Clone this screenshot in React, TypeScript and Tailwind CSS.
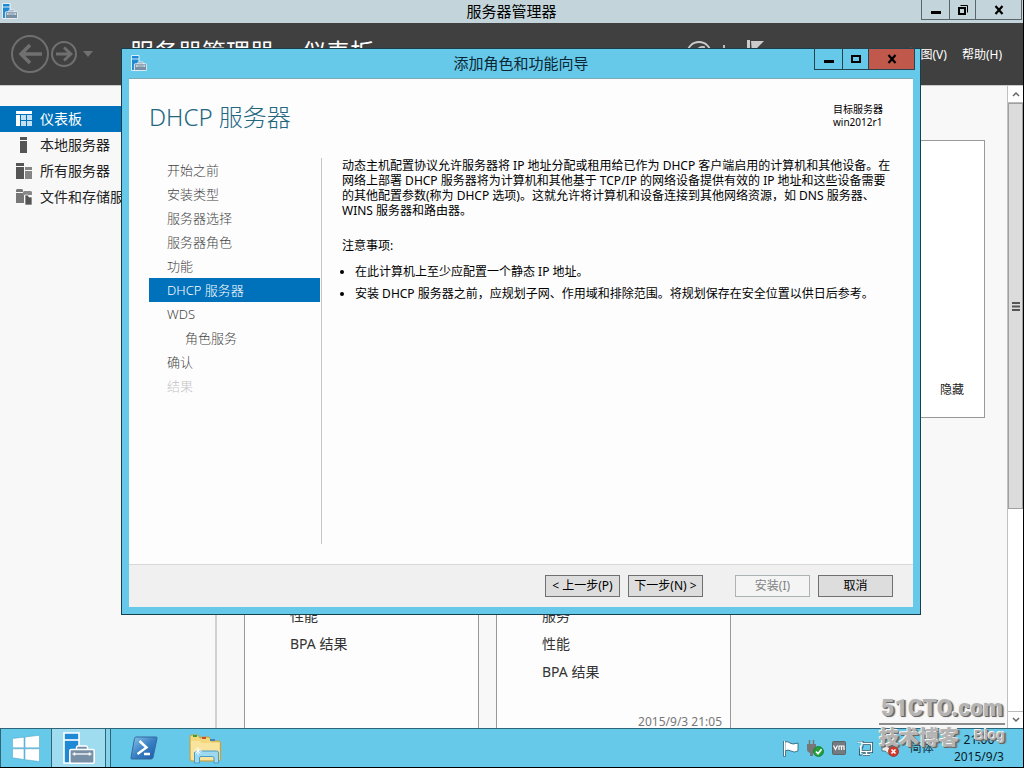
import React from "react";

const NAV = [
  { label: "开始之前" },
  { label: "安装类型" },
  { label: "服务器选择" },
  { label: "服务器角色" },
  { label: "功能" },
  { label: "DHCP 服务器", active: true },
  { label: "WDS" },
  { label: "角色服务", nested: true },
  { label: "确认" },
  { label: "结果", disabled: true },
];

function ServerIcon({ className }: { className: string }) {
  return (
    <svg viewBox="0 0 32 32" className={className} aria-hidden="true">
      <path d="M1 1h15v30H1z" fill="#1e8ad6" stroke="#fff" strokeWidth="1.6" />
      <path d="M1 8h15" stroke="#fff" strokeWidth="1.6" />
      <path d="M13.500 19v-3.500q0-1.500 1.500-1.500h8q1.500 0 1.500 1.500V19z" fill="#7790a6" stroke="#fff" strokeWidth="1.400" />
      <rect x="6.800" y="17.500" width="24.400" height="13.700" rx="1.500" fill="#7790a6" stroke="#fff" strokeWidth="1.600" />
      <path d="M9.500 22h19" stroke="#fff" strokeWidth="1.300" />
      <path d="M11.500 20.500v3M26.500 20.500v3" stroke="#fff" strokeWidth="1.600" />
    </svg>
  );
}

function MinGlyph() {
  return (
    <svg viewBox="0 0 12 12" className="size-3" aria-hidden="true">
      <path d="M1 7h10v3H1z" fill="#000" />
    </svg>
  );
}
function MaxGlyph() {
  return (
    <svg viewBox="0 0 12 12" className="size-3" aria-hidden="true">
      <rect x="2" y="3" width="8" height="6" fill="none" stroke="#000" strokeWidth="2" />
    </svg>
  );
}
function RestoreGlyph() {
  return (
    <svg viewBox="0 0 12 12" className="size-3" aria-hidden="true">
      <path d="M3.500 1.500h7v7" fill="none" stroke="#000" />
      <rect x="2" y="4" width="6" height="6" fill="none" stroke="#000" strokeWidth="2" />
    </svg>
  );
}
function CloseGlyph() {
  return (
    <svg viewBox="0 0 12 12" className="size-3" aria-hidden="true">
      <path d="M2.500 2l7 8M9.500 2l-7 8" stroke="#000" strokeWidth="2.200" />
    </svg>
  );
}

function SideIcon({ kind }: { kind: string }) {
  return (
    <svg viewBox="0 0 16 16" className="size-4" aria-hidden="true">
      {kind === "dash" && (
        <>
          <path d="M0 0h16v3H0z" fill="#fff" />
          <path d="M0 4h4v11H0z" fill="#fff" />
          <path d="M5 4h5v5H5zM11 4h5v5h-5zM5 10h5v5H5zM11 10h5v5h-5z" fill="#c3e1f5" />
        </>
      )}
      {kind === "local" && <path d="M4 0h7v3H4zM4 4h7v12H4z" fill="#555" />}
      {kind === "all" && (
        <>
          <path d="M0 0h8v3H0zM0 4h8v12H0z" fill="#555" />
          <path d="M9 4h7v3H9zM9 8h7v8H9z" fill="#858585" />
        </>
      )}
      {kind === "files" && (
        <>
          <path d="M0 1l1-1h5l1 1v2H0zM0 4h8v10H0z" fill="#777" />
          <path d="M7 3l1-1h7l1 1v3H7z" fill="#888" />
          <path d="M9 6h3l1 2h3v8H9z" fill="#555" stroke="#f8f8f8" strokeWidth="0.700" />
        </>
      )}
    </svg>
  );
}

function SideItem({ kind, label, active }: { kind: string; label: string; active?: boolean }) {
  return (
    <a
      href="#"
      className={
        active
          ? "flex h-[26px] items-center gap-2 bg-[#0072bc] pl-4 text-sm text-white"
          : "flex h-[26px] items-center gap-2 pl-4 text-sm text-[#222]"
      }
    >
      <SideIcon kind={kind} />
      {label}
    </a>
  );
}

function Tile({ rows, date }: { rows: string[]; date?: string }) {
  return (
    <section className="flex w-[235px] flex-col justify-end border-x border-t border-[#999] bg-[#fdfdfd]">
      <ul className="pl-[45px] text-sm leading-7 text-[#333]">
        {rows.map((r) => (
          <li key={r}>{r}</li>
        ))}
      </ul>
      <p className={date ? "mt-7 h-[14px] pr-2 text-right text-xs leading-4 text-[#777]" : "mt-14 h-[14px]"}>{date}</p>
    </section>
  );
}

function Dialog() {
  return (
    <div
      role="dialog"
      aria-labelledby="wizard-title"
      className="absolute top-12 left-[121px] flex h-[567px] w-[800px] flex-col border border-[#17404f] bg-[#66c9e9] px-[7px] pb-[7px]"
    >
      <header className="grid h-[30px] shrink-0 grid-cols-[1fr_auto_1fr] border-b border-[#7fa9b5]">
        <ServerIcon className="mt-[6px] ml-[2px] size-4" />
        <h2 id="wizard-title" className="text-[15px] leading-7 text-[#0b2733]">
          添加角色和功能向导
        </h2>
        <div className="-mr-[2px] -mt-px flex h-[22px] justify-self-end border border-[#26444f]">
          <button aria-label="最小化" className="flex w-7 items-center justify-center border-r border-[#26444f]">
            <MinGlyph />
          </button>
          <button aria-label="最大化" className="flex w-[26px] items-center justify-center border-r border-[#26444f]">
            <MaxGlyph />
          </button>
          <button aria-label="关闭" className="flex w-[45px] items-center justify-center bg-[#c0584b]">
            <CloseGlyph />
          </button>
        </div>
      </header>

      <div className="flex min-h-0 flex-1 flex-col bg-[#fdfdfd]">
        <div className="flex items-start justify-between pr-[30px] pl-5">
          <h1 className="pt-5 text-2xl leading-9 font-light text-[#23677f]">DHCP 服务器</h1>
          <p className="pt-6 text-[10px] leading-[13px] text-black">
            目标服务器
            <br />
            win2012r1
          </p>
        </div>
        <div className="flex min-h-0 flex-1 pt-[23px] pb-5">
          <nav className="w-[193px] shrink-0 border-r border-[#c4c4c4] pl-5">
            {NAV.map((n) => (
              <a
                key={n.label}
                href="#"
                className={
                  n.active
                    ? "mr-px block bg-[#0072bc] pl-[18px] text-[13px] leading-6 font-light text-white"
                    : n.disabled
                      ? "block pl-[18px] text-[13px] leading-6 font-light text-[#c4c4c4]"
                      : n.nested
                        ? "block pl-9 text-[13px] leading-6 font-light text-[#444]"
                        : "block pl-[18px] text-[13px] leading-6 font-light text-[#444]"
                }
              >
                {n.label}
              </a>
            ))}
          </nav>
          <div className="min-w-0 flex-1 pr-4 pl-5 text-xs leading-[15px] text-black">
            <p>
              动态主机配置协议允许服务器将 IP 地址分配或租用给已作为 DHCP 客户端启用的计算机和其他设备。在网络上部署 DHCP 服务器将为计算机和其他基于 TCP/IP 的网络设备提供有效的 IP 地址和这些设备需要的其他配置参数(称为 DHCP 选项)。这就允许将计算机和设备连接到其他网络资源，如 DNS 服务器、WINS 服务器和路由器。
            </p>
            <p className="mt-5">注意事项:</p>
            <ul className="mt-2 list-disc pl-[13px] leading-[22px]">
              <li>在此计算机上至少应配置一个静态 IP 地址。</li>
              <li>安装 DHCP 服务器之前，应规划子网、作用域和排除范围。将规划保存在安全位置以供日后参考。</li>
            </ul>
          </div>
        </div>
        <footer className="flex h-[43px] shrink-0 items-center justify-end gap-2 border-t border-[#d9d9d9] bg-[#f0f0f0] pr-5 text-xs text-black">
          <button className="h-[22px] w-[75px] border border-[#707070] bg-[#dddddd]">&lt; 上一步(P)</button>
          <button className="h-[22px] w-[75px] border border-[#707070] bg-[#dddddd]">下一步(N) &gt;</button>
          <button disabled className="ml-6 h-[22px] w-[75px] border border-[#adb2b5] bg-[#f4f4f4] text-[#838383]">
            安装(I)
          </button>
          <button className="h-[22px] w-[75px] border border-[#707070] bg-[#dddddd]">取消</button>
        </footer>
      </div>
    </div>
  );
}

function Scrollbar() {
  return (
    <div className="flex w-4 shrink-0 flex-col border-l border-[#c0c0c0] bg-white">
      <button aria-label="向上滚动" className="flex h-[17px] items-center justify-center border-b border-[#bbb]">
        <svg viewBox="0 0 8 6" className="h-[6px] w-2" aria-hidden="true">
          <path d="M1 5l3-3 3 3" fill="none" stroke="#666" strokeWidth="1.500" />
        </svg>
      </button>
      <div className="flex flex-[406] items-center justify-center border border-[#a0a0a0] bg-[#dcdcdc]">
        <svg viewBox="0 0 8 9" className="h-[9px] w-2" aria-hidden="true">
          <path d="M0 1h8M0 4.500h8M0 8h8" stroke="#555" strokeWidth="1.800" />
        </svg>
      </div>
      <div className="flex-[203]" />
      <button aria-label="向下滚动" className="flex h-[17px] items-center justify-center border-t border-[#bbb]">
        <svg viewBox="0 0 8 6" className="h-[6px] w-2" aria-hidden="true">
          <path d="M1 1l3 3 3-3" fill="none" stroke="#666" strokeWidth="1.500" />
        </svg>
      </button>
    </div>
  );
}

function Taskbar() {
  return (
    <footer className="flex h-[39px] shrink-0 items-stretch border-t border-[#2f6578] bg-[#66c9e9]">
      <button aria-label="开始" className="flex w-[51px] items-center justify-center border-l border-[#2f6578]">
        <svg viewBox="0 0 28 27" className="h-[27px] w-7" aria-hidden="true">
          <path
            d="M.500 3.500L12 2.200v10.600H.500zM13 2L27.500.300v12.500H13zM.500 13.800H12v10.700L.500 22.800zM13 13.800h14.500v12.700L13 24.700z"
            fill="#fff"
            stroke="#4a9fc0"
            strokeWidth="0.500"
          />
        </svg>
      </button>
      <button aria-label="服务器管理器" className="flex w-[55px] items-center justify-center border-x border-[#2f6578] bg-[#a0dcf0]">
        <ServerIcon className="size-8" />
      </button>
      <div className="w-[5px] border-r border-[#2f6578] bg-[#86d2ed]" />
      <button aria-label="PowerShell" className="flex w-[65px] items-center justify-center">
        <svg viewBox="0 0 28 24" className="h-6 w-7" aria-hidden="true">
          <defs>
            <linearGradient id="ps" x1="0" y1="0" x2="1" y2="1">
              <stop offset="0" stopColor="#8cc8ec" />
              <stop offset="0.500" stopColor="#3a80c4" />
              <stop offset="1" stopColor="#1a5ba8" />
            </linearGradient>
          </defs>
          <path d="M6 1h20q1.500 0 1 1.500l-4 19q-.500 1.500-2 1.500H2Q.500 23 1 21.500L4.500 2.500Q5 1 6 1z" fill="url(#ps)" stroke="#336b9e" />
          <path d="M9.500 5l7 6.500L7.500 18M14 18h6" fill="none" stroke="#fff" strokeWidth="2.400" />
        </svg>
      </button>
      <button aria-label="文件资源管理器" className="flex w-[58px] items-center justify-center">
        <svg viewBox="0 0 33 31" className="h-[31px] w-[33px]" aria-hidden="true">
          <path d="M1 7V3.500Q1 2 3 2h6l2 3h1V4h8l2 3v1h8q1.500 0 1.500 2v16q0 2-2 2H3q-2 0-2-2z" fill="#f3d87e" stroke="#c79f3d" />
          <path d="M2 8h9l2 2h17v17H3q-1 0-1-1z" fill="#f8e49c" />
          <path d="M4 2h4v2H4z" fill="#36a13a" />
          <path d="M13 4h4v2h-4z" fill="#c6502e" />
          <path d="M21 6h5v2h-5z" fill="#3c86ba" />
          <path d="M5.500 30V20q0-2 2-2h20q2 0 2 2v10h-4.500v-5q0-1.500-1.500-1.500H12q-1.500 0-1.500 1.500v5z" fill="#9dd9f0" stroke="#4c9ac4" />
          <path d="M9 14v8M5 18h8M6.500 15.500l5 5M11.500 15.500l-5 5" stroke="#fff" strokeWidth="0.900" />
        </svg>
      </button>
      <div className="ml-auto flex items-center gap-2 pr-[19px]">
        <svg viewBox="0 0 16 17" className="h-[17px] w-4" aria-hidden="true">
          <path d="M1.500 1v15.500" stroke="#24566a" strokeWidth="3" />
          <path d="M2 2q3-1 5 1t8 0v8q-4 2-7 0t-6 0z" fill="#fff" stroke="#24566a" strokeWidth="0.800" />
          <path d="M1.500 1v15" stroke="#fff" strokeWidth="1.400" />
        </svg>
        <svg viewBox="0 0 17 17" className="size-[17px]" aria-hidden="true">
          <path d="M2.500 0v4M6.500 0v4" stroke="#777" strokeWidth="1.500" />
          <path d="M0 4h9v6q-1 3-3 3v3H3v-3q-3-1-3-3z" fill="#777" />
          <circle cx="11.500" cy="11.500" r="5" fill="#22a03b" stroke="#147226" strokeWidth="0.700" />
          <path d="M9 11.500l2 2.300 3.500-4.600" fill="none" stroke="#fff" strokeWidth="1.600" />
        </svg>
        <svg viewBox="0 0 14 14" className="size-[14px]" aria-hidden="true">
          <rect x="0.500" y="0.500" width="13" height="13" rx="1" fill="#727b80" stroke="#5d6467" />
          <path d="M1.500 4.500l2 4 2-4M7 9V5h2.500v4M9.500 5H12v4" fill="none" stroke="#fff" strokeWidth="1.200" />
        </svg>
        <svg viewBox="0 0 17 15" className="ml-[2px] h-[15px] w-[17px]" aria-hidden="true">
          <path d="M5 2.500h10.500v8H5zM10.500 10.500v3M7 13.500h7M1 1h5v4H4.500v8H6" fill="none" stroke="#1f5265" strokeWidth="3" />
          <path d="M5 2.500h10.500v8H5zM10.500 10.500v3M7 13.500h7" fill="none" stroke="#fff" strokeWidth="1.400" />
          <path d="M1 1h5v4H4.500v8H6" fill="#66c9e9" stroke="#fff" strokeWidth="1.200" />
        </svg>
        <svg viewBox="0 0 18 17" className="h-[17px] w-[18px]" aria-hidden="true">
          <path d="M1 6h3l5-5v14l-5-4H1z" fill="#eee" stroke="#3c6272" strokeWidth="0.800" />
          <circle cx="12.500" cy="11.500" r="5" fill="#d43a2c" stroke="#96251b" strokeWidth="0.700" />
          <path d="M10.500 9.500l4 4M14.500 9.500l-4 4" stroke="#fff" strokeWidth="1.600" />
        </svg>
        <span className="ml-[3px] text-xs text-[#14303b]">简体</span>
        <p className="ml-3 text-center text-xs leading-[17px] text-[#0c2028]">
          21:06
          <br />
          2015/9/3
        </p>
      </div>
    </footer>
  );
}

function Watermark() {
  return (
    <div className="pointer-events-none absolute right-[18px] bottom-[17px] w-[126px] leading-none font-bold text-[#b4b4b4] [text-shadow:-1px_-1px_0_#f4f4f4,1px_1px_0_#666,2px_1px_1px_#777]">
      <p className="border-b-2 border-[#8d8d8d] text-center font-[Roboto,'Liberation_Sans',sans-serif] text-[23px] leading-7 font-black">
        51CTO.com
      </p>
      <p className="flex items-start justify-between pt-px">
        <span className="text-xl leading-6 font-black">技术博客</span>
        <span className="font-['Liberation_Sans',sans-serif] text-sm leading-[18px]">Blog</span>
      </p>
    </div>
  );
}

export default function App() {
  return (
    <div className="relative flex h-screen flex-col overflow-hidden border-r border-b border-black bg-[#f8f8f8] font-['Noto_Sans','Noto_Sans_CJK_SC',sans-serif]">
      <header className="grid h-[23px] shrink-0 grid-cols-[1fr_auto_1fr] bg-[#c3d5da]">
        <ServerIcon className="mt-[3px] ml-[2px] size-4" />
        <h1 className="text-[15px] leading-[23px] text-black">服务器管理器</h1>
        <div className="mr-px flex h-5 justify-self-end border-x border-b border-[#59666b]">
          <button aria-label="最小化" className="flex w-7 items-center justify-center border-r border-[#59666b]">
            <MinGlyph />
          </button>
          <button aria-label="还原" className="flex w-[26px] items-center justify-center border-r border-[#59666b]">
            <RestoreGlyph />
          </button>
          <button aria-label="关闭" className="flex w-[45px] items-center justify-center">
            <CloseGlyph />
          </button>
        </div>
      </header>

      <div className="flex h-[63px] shrink-0 items-center border-b border-[#ccc] bg-[#404040] text-white">
        <svg viewBox="0 0 84 40" className="ml-[10px] h-10 w-[84px] shrink-0" aria-hidden="true">
          <g fill="none" stroke="#707070">
            <circle cx="20" cy="20" r="18" strokeWidth="2" />
            <circle cx="54" cy="20" r="12" strokeWidth="2" />
            <path d="M32 20H11M20 11l-9 9 9 9" strokeWidth="3.500" />
            <path d="M46 20h14M54 13.500l7 6.500-7 6.500" strokeWidth="2.800" />
          </g>
          <path d="M73 17h10l-5 6z" fill="#707070" />
        </svg>
        <p className="ml-9 flex gap-[9px] text-2xl whitespace-nowrap">
          服务器管理器 <span className="w-[10px] text-center text-base leading-9">•</span> 仪表板
        </p>
        <svg viewBox="0 0 78 28" className="ml-auto h-7 w-[78px] shrink-0" aria-hidden="true">
          <g fill="none" stroke="#ccc" strokeWidth="1.800">
            <circle cx="13" cy="14" r="12" />
            <path d="M9 12q5-6 9-5v5M38 5v18" />
          </g>
          <path d="M61 0h3v28h-3zM65 1h13L66 13z" fill="#ccc" />
        </svg>
        <nav className="ml-[145px] flex gap-[15px] pt-[2px] pr-[21px] text-xs">
          <a href="#">视图(V)</a>
          <a href="#">帮助(H)</a>
        </nav>
      </div>

      <main className="flex min-h-0 flex-1">
        <aside className="w-[217px] shrink-0 border-r-2 border-[#d0d0d0] pt-5">
          <SideItem kind="dash" label="仪表板" active />
          <SideItem kind="local" label="本地服务器" />
          <SideItem kind="all" label="所有服务器" />
          <SideItem kind="files" label="文件和存储服务" />
        </aside>
        <div className="flex min-w-0 flex-1 flex-col gap-6 pt-[54px] pr-[22px] pl-[27px]">
          <section className="flex h-[278px] shrink-0 items-end justify-end border border-[#999] bg-white pr-5 pb-[19px]">
            <button className="text-xs leading-4 text-[#222]">隐藏</button>
          </section>
          <div className="flex min-h-0 flex-1 gap-[17px]">
            <Tile rows={["性能", "BPA 结果"]} />
            <Tile rows={["服务", "性能", "BPA 结果"]} date="2015/9/3 21:05" />
          </div>
        </div>
        <Scrollbar />
      </main>

      <Taskbar />
      <Dialog />
      <Watermark />
    </div>
  );
}
